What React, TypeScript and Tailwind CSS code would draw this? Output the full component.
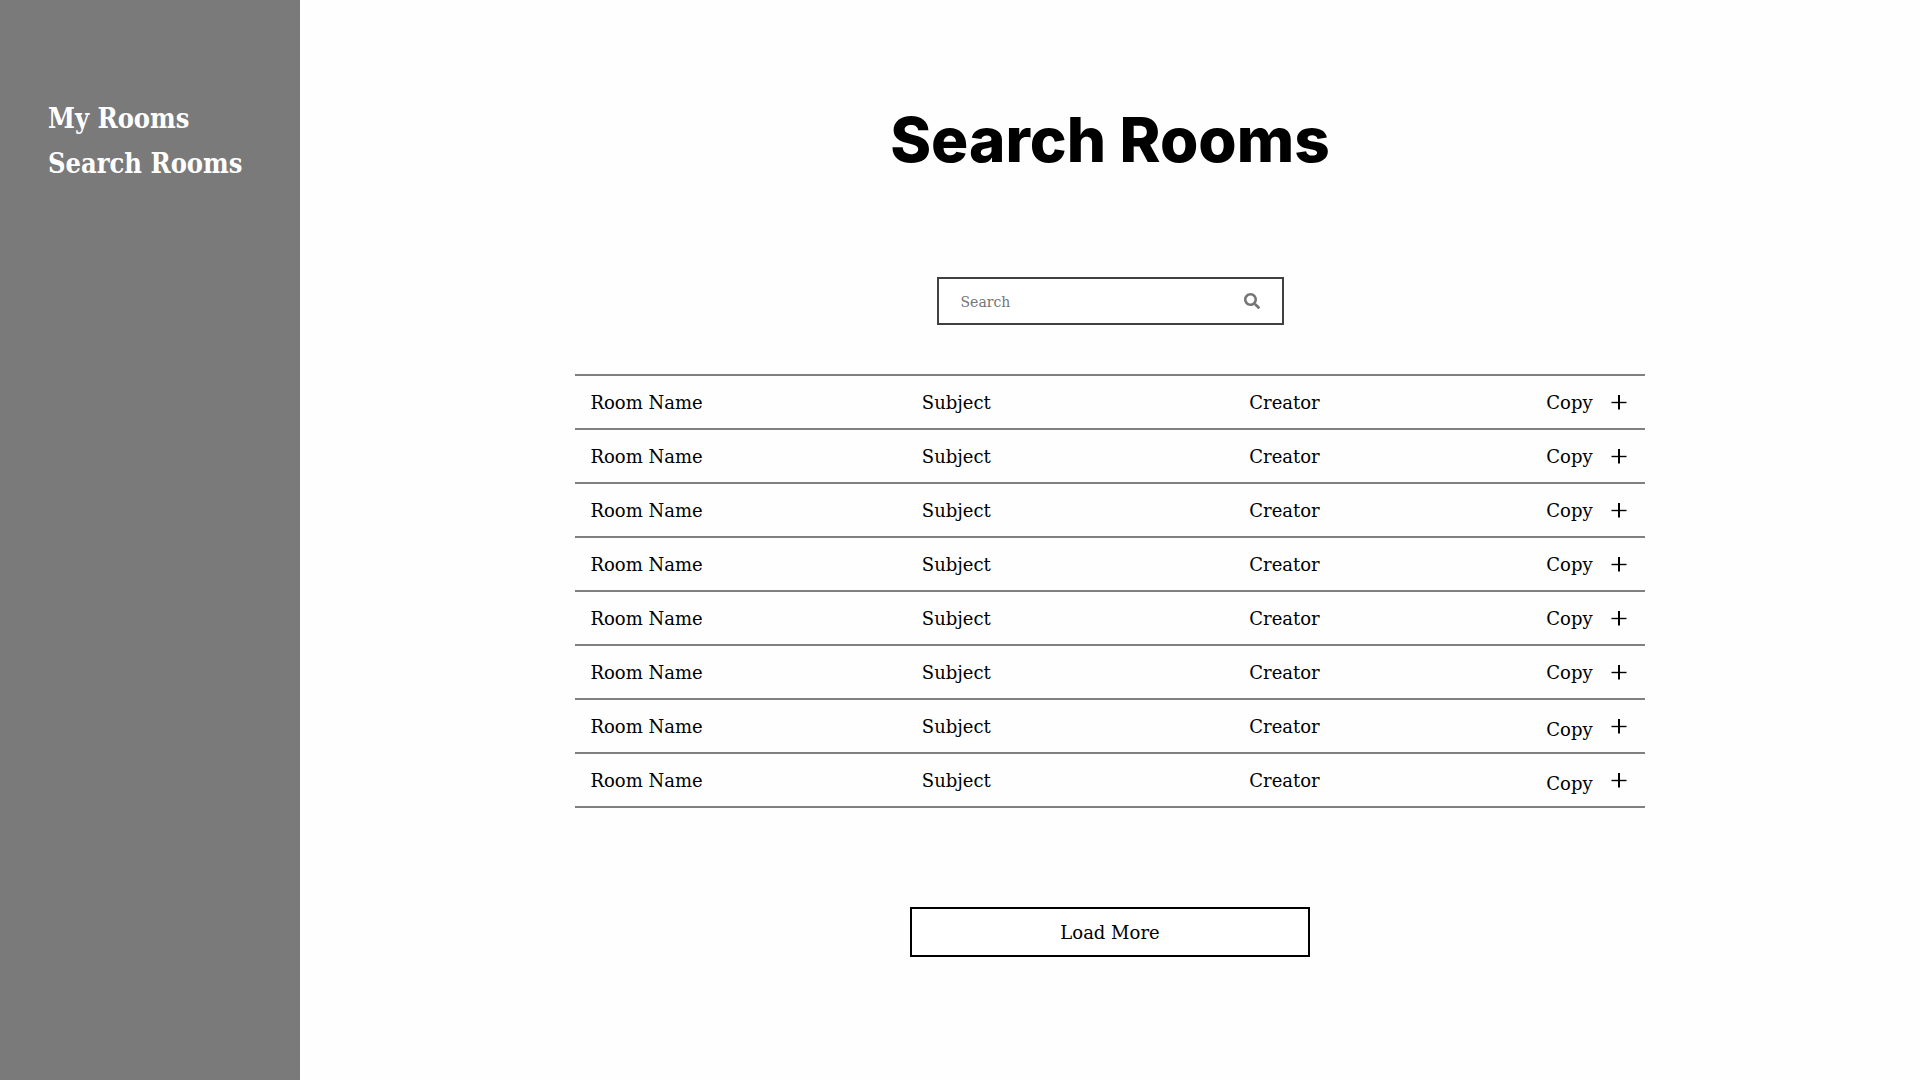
import { FaSearch } from "react-icons/fa";

type Room = { name: string; subject: string; creator: string; copyClass: string };

const room = (copyClass = ""): Room => ({
  name: "Room Name",
  subject: "Subject",
  creator: "Creator",
  copyClass,
});

const rooms: Room[] = [
  room(),
  room(),
  room(),
  room(),
  room(),
  room(),
  room("pt-1.5"),
  room("pt-1.5"),
];

function PlusIcon() {
  return (
    <svg className="size-4 shrink-0" viewBox="0 0 16 16" aria-hidden="true">
      <path d="M0.5 7.5H15.5" stroke="currentColor" strokeWidth="1.4" />
      <path d="M8 0V14.5" stroke="currentColor" strokeWidth="2" />
    </svg>
  );
}

function Sidebar() {
  return (
    <nav className="w-[300px] shrink-0 bg-[#7a7a7a] pt-24 pl-12 font-['DejaVu_Serif_Condensed','DejaVu_Serif',serif] text-[27px] leading-[45px] font-bold whitespace-nowrap text-white">
      <ul>
        <li>
          <a href="#my-rooms">My Rooms</a>
        </li>
        <li>
          <a href="#search-rooms">Search Rooms</a>
        </li>
      </ul>
    </nav>
  );
}

function RoomTable() {
  return (
    <table className="w-[66%] table-fixed border-t-2 border-[#808080] text-left text-lg leading-[26px]">
      <colgroup>
        <col className="w-[31%]" />
        <col className="w-[31%]" />
        <col className="w-[19%]" />
        <col className="w-[19%]" />
      </colgroup>
      <tbody>
        {rooms.map((r, i) => (
          <tr key={i} className="h-[54px] border-b-2 border-[#808080]">
            <td className="pt-0.5 pl-[15px]">{r.name}</td>
            <td className="pt-0.5 pl-[15px]">{r.subject}</td>
            <td className="pt-0.5 pl-[11px]">{r.creator}</td>
            <td className="pt-0.5 pr-[18px]">
              <button type="button" className="ml-auto flex items-center gap-[18px]">
                <span className={r.copyClass}>Copy</span>
                <PlusIcon />
              </button>
            </td>
          </tr>
        ))}
      </tbody>
    </table>
  );
}

export default function App() {
  return (
    <div className="flex min-h-screen bg-[#fefefe] font-['DejaVu_Serif',serif] text-black">
      <Sidebar />
      <main className="flex flex-1 flex-col items-center pt-[104px] pb-20">
        <h1 className="font-['Inter',sans-serif] text-[62px] leading-[72px] font-extrabold">Search Rooms</h1>
        <form className="mt-[101px] flex h-12 w-[347px] items-center border-2 border-[#404040] bg-white pr-[22px] pl-[22px]">
          <input
            type="search"
            aria-label="Search rooms"
            placeholder="Search"
            className="min-w-0 flex-1 bg-transparent pt-0.5 text-sm outline-none placeholder:text-[#757575]"
          />
          <button type="submit" aria-label="Search" className="text-[#757575]">
            <FaSearch className="size-4" />
          </button>
        </form>
        <div className="mt-[49px] flex w-full justify-center">
          <RoomTable />
        </div>
        <button type="button" className="mt-[99px] h-[50px] w-[400px] border-2 border-black bg-white pt-0.5 text-lg">
          Load More
        </button>
      </main>
    </div>
  );
}
